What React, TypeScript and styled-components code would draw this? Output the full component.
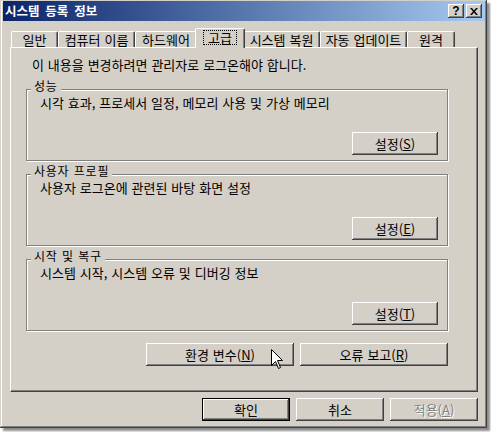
import React from 'react';
import styled, { createGlobalStyle } from 'styled-components';

const FACE = '#d4d0c8';
const HL = '#ffffff';
const SH = '#808080';
const DK = '#404040';

const GlobalStyle = createGlobalStyle`
  html, body { margin: 0; padding: 0; background: #ffffff; }
  body {
    font-family: "Noto Sans CJK KR", "Noto Sans", sans-serif;
    font-size: 13px;
    letter-spacing: 0;
    word-spacing: 1px;
    color: #000;
  }
`;

const Stage = styled.div`
  position: relative;
  width: 491px;
  height: 432px;
  overflow: hidden;
  background: #fff;
`;

const Window = styled.div`
  box-sizing: border-box;
  width: 487px;
  height: 428px;
  padding: 1px 2px 2px 3px;
  background: ${FACE};
  display: flex;
  flex-direction: column;
  box-shadow: inset -1px -1px ${DK}, inset 1px 1px ${FACE}, inset -2px -2px ${SH},
    inset 2px 2px ${HL}, 3px 3px 2px rgba(0, 0, 0, 0.45);
`;

const TitleBar = styled.div`
  flex: none;
  height: 20px;
  display: flex;
  align-items: center;
  padding: 0 3px 0 2px;
  background: linear-gradient(to right, #0a246a, #a6caf0);
`;

const TitleText = styled.span`
  flex: 1;
  color: #fff;
  font-size: 12.5px;
  font-weight: bold;
  letter-spacing: 0;
  word-spacing: 3px;
  line-height: 20px;
`;

const CaptionButton = styled.div`
  box-sizing: border-box;
  width: 16px;
  height: 14px;
  background: ${FACE};
  box-shadow: inset -1px -1px ${DK}, inset 1px 1px ${HL}, inset -2px -2px ${SH};
  display: flex;
  align-items: center;
  justify-content: center;
  & + & {
    margin-left: 2px;
  }
`;

const HelpGlyph = styled.span`
  font-family: "Liberation Sans", Arial, sans-serif;
  font-weight: bold;
  font-size: 12px;
  letter-spacing: 0;
  line-height: 12px;
  margin-top: -1px;
`;

const TabStrip = styled.div`
  flex: none;
  height: 19px;
  margin: 7px 7px 0;
  padding-left: 1px;
  display: flex;
  align-items: flex-end;
`;

const Tab = styled.div<{ $w: number; $active?: boolean }>`
  box-sizing: border-box;
  position: relative;
  z-index: ${(p) => (p.$active ? 2 : 1)};
  width: ${(p) => (p.$active ? p.$w + 4 : p.$w)}px;
  height: ${(p) => (p.$active ? 20 : 16)}px;
  margin: ${(p) => (p.$active ? '0 -2px -1px' : '0')};
  padding-top: ${(p) => (p.$active ? 1 : 0)}px;
  background: ${FACE};
  border-top: 1px solid ${HL};
  border-left: 1px solid ${HL};
  border-right: 1px solid ${DK};
  border-radius: 2px 2px 0 0;
  box-shadow: inset -1px 0 ${SH};
  display: flex;
  justify-content: center;
  align-items: flex-start;
  line-height: 15px;
  white-space: nowrap;
`;

const FocusLabel = styled.span`
  outline: 1px dotted #000;
  outline-offset: 0;
  padding: 0 4px;
  line-height: 13px;
  margin-top: 1px;
`;

const Panel = styled.div`
  flex: none;
  box-sizing: border-box;
  height: 345px;
  margin: 0 7px;
  padding: 10px 0 0 15px;
  border-top: 1px solid ${HL};
  border-left: 1px solid ${HL};
  border-right: 1px solid ${DK};
  border-bottom: 1px solid ${DK};
  box-shadow: inset -1px -1px ${SH};
  display: flex;
  flex-direction: column;
`;

const Note = styled.div`
  padding-left: 6px;
  line-height: 14px;
  margin-bottom: 17px;
  white-space: nowrap;
`;

const GroupBox = styled.div`
  box-sizing: border-box;
  width: 422px;
  height: 72px;
  border: 1px solid ${SH};
  box-shadow: inset 1px 1px ${HL}, 1px 1px ${HL};
  padding: 0 9px 5px 13px;
  display: flex;
  flex-direction: column;
  align-items: flex-start;
  & + & {
    margin-top: 13px;
  }
`;

const GroupCaption = styled.span`
  margin: -11px 0 0 -9px;
  padding: 0 3px;
  background: ${FACE};
  font-size: 12px;
  letter-spacing: 0.75px;
  line-height: 14px;
  white-space: nowrap;
`;

const GroupText = styled.div`
  margin-top: 3px;
  line-height: 14px;
  white-space: nowrap;
`;

const Button = styled.button<{ $w: number; $primary?: boolean }>`
  box-sizing: border-box;
  flex: none;
  width: ${(p) => p.$w}px;
  height: 23px;
  margin: 0;
  padding: 0;
  font: inherit;
  letter-spacing: inherit;
  word-spacing: inherit;
  color: #000;
  background: ${FACE};
  border: ${(p) => (p.$primary ? '1px solid #000' : 'none')};
  box-shadow: inset -1px -1px ${DK}, inset 1px 1px ${HL}, inset -2px -2px ${SH};
  line-height: 14px;
  white-space: nowrap;
  &:disabled {
    color: ${SH};
    text-shadow: 1px 1px ${HL};
  }
`;

const GroupButton = styled(Button)`
  margin-top: auto;
  align-self: flex-end;
`;

const ActionRow = styled.div`
  width: 422px;
  margin-top: 12px;
  display: flex;
  justify-content: flex-end;
  gap: 6px;
`;

const DialogButtons = styled.div`
  flex: none;
  margin: 6px 7px 0 0;
  display: flex;
  justify-content: flex-end;
  gap: 6px;
`;

const Cursor = styled.svg`
  position: absolute;
  left: 271px;
  top: 349px;
`;

const tabs = [
  { label: '일반', width: 47 },
  { label: '컴퓨터 이름', width: 77 },
  { label: '하드웨어', width: 62 },
  { label: '고급', width: 46, active: true },
  { label: '시스템 복원', width: 77 },
  { label: '자동 업데이트', width: 87 },
  { label: '원격', width: 48 },
];

const groups = [
  { title: '성능', text: '시각 효과, 프로세서 일정, 메모리 사용 및 가상 메모리', key: 'S' },
  { title: '사용자 프로필', text: '사용자 로그온에 관련된 바탕 화면 설정', key: 'E' },
  { title: '시작 및 복구', text: '시스템 시작, 시스템 오류 및 디버깅 정보', key: 'T' },
];

export default function App() {
  return (
    <Stage>
      <GlobalStyle />
      <Window>
        <TitleBar>
          <TitleText>시스템 등록 정보</TitleText>
          <CaptionButton>
            <HelpGlyph>?</HelpGlyph>
          </CaptionButton>
          <CaptionButton>
            <svg width="8" height="7" viewBox="0 0 8 7">
              <path d="M0 0 L2 0 L4 2.5 L6 0 L8 0 L5 3.5 L8 7 L6 7 L4 4.5 L2 7 L0 7 L3 3.5 Z" fill="#000" />
            </svg>
          </CaptionButton>
        </TitleBar>

        <TabStrip>
          {tabs.map((t) => (
            <Tab key={t.label} $w={t.width} $active={t.active}>
              {t.active ? <FocusLabel>{t.label}</FocusLabel> : t.label}
            </Tab>
          ))}
        </TabStrip>

        <Panel>
          <Note>이 내용을 변경하려면 관리자로 로그온해야 합니다.</Note>
          {groups.map((g) => (
            <GroupBox key={g.title}>
              <GroupCaption>{g.title}</GroupCaption>
              <GroupText>{g.text}</GroupText>
              <GroupButton $w={86}>
                설정(<u>{g.key}</u>)
              </GroupButton>
            </GroupBox>
          ))}
          <ActionRow>
            <Button $w={148}>
              환경 변수(<u>N</u>)
            </Button>
            <Button $w={148}>
              오류 보고(<u>R</u>)
            </Button>
          </ActionRow>
        </Panel>

        <DialogButtons>
          <Button $w={88} $primary>
            확인
          </Button>
          <Button $w={88}>취소</Button>
          <Button $w={88} disabled>
            적용(<u>A</u>)
          </Button>
        </DialogButtons>
      </Window>
      <Cursor width="13" height="21" viewBox="0 0 13 21">
        <path
          d="M0.5 0.5 L0.5 16.5 L4.5 12.5 L7.5 19.5 L9.5 18.5 L6.5 11.5 L11.5 11.5 Z"
          fill="#fff"
          stroke="#000"
          strokeWidth="1"
          strokeLinejoin="miter"
        />
      </Cursor>
    </Stage>
  );
}
